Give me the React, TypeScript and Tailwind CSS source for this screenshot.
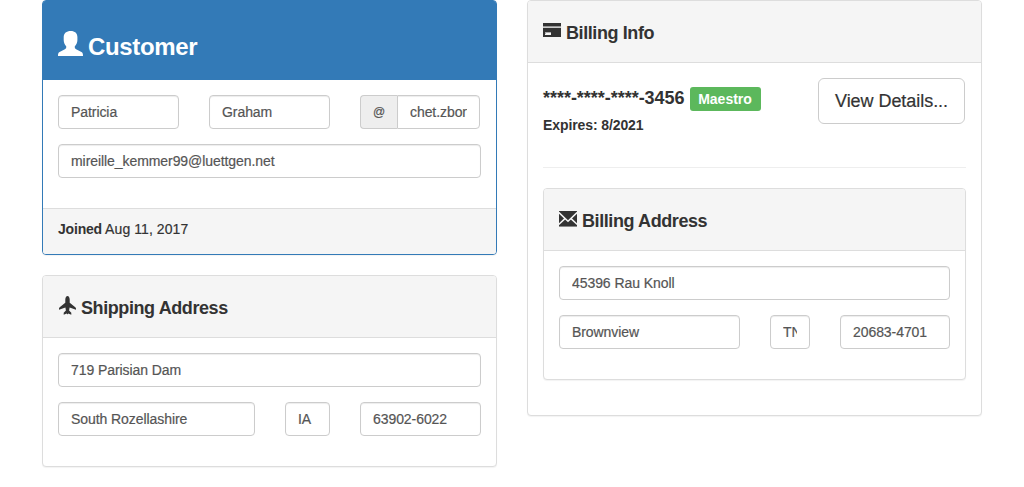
import type { ReactNode } from "react";

const field =
  "block h-[34px] min-w-0 rounded-[4px] border border-[#ccc] bg-white px-3 py-1.5 text-[14px] leading-5 tracking-[-0.07px] text-[#555] shadow-[inset_0_1px_1px_rgba(0,0,0,0.075)] outline-none [-webkit-text-stroke:0.2px_#555]";

function Field({ value, label, className }: { value: string; label: string; className: string }) {
  return <input aria-label={label} defaultValue={value} className={`${field} ${className}`} />;
}

function UserIcon() {
  return (
    <svg viewBox="0 0 25 25" className="mt-[14px] h-[25px] w-[25px] shrink-0" fill="currentColor">
      <path d="M12.700 0C8.500 0 5.700 2.200 5.700 6v3c0 2.600 1 4.800 2.500 6.300v1.300c0 .8-.5 1.200-1.300 1.600L1.600 21C.3 21.800 0 22.600 0 25h25c0-2.400-.3-3.200-1.600-4l-5.300-2.800c-.8-.4-1.300-.8-1.300-1.600v-1.300c1.600-1.500 2.600-3.700 2.600-6.300V6c0-3.800-2.500-6-6.700-6Z" />
    </svg>
  );
}

function PlaneIcon() {
  return (
    <svg viewBox="0 0 18 19" className="mt-px h-[19px] w-[18px] shrink-0" fill="currentColor">
      <path d="M9.500 0C8.300 0 7.300 1.700 7.300 3.600v3.100L1.700 11.200c-.5.4-.7.900-.7 1.400v1.200l6.400-2.200.5 3-2.200 2.200V18.800l3.100-1.300.7.900.7-.9 3.100 1.300v-2l-2.200-2.200.5-3 6.400 2.200v-1.200c0-.5-.2-1-.7-1.400l-5.600-4.500V3.600C11.700 1.700 10.700 0 9.500 0Z" />
    </svg>
  );
}

function CardIcon() {
  return (
    <svg viewBox="0 0 18 14" className="mt-[3px] h-[14px] w-[18px] shrink-0">
      <path fill="currentColor" d="M0 0h18v3H0zM0 5h18v9H0z" />
      <path fill="#999" d="M0 3h18v1H0z" />
      <path fill="#ccc" d="M0 4h18v1H0z" />
      <path fill="#f5f5f5" d="M2 9h6v3H2z" />
      <path fill="#aaa" d="M2 9h6v1H3v1H2z" />
    </svg>
  );
}

function MailIcon() {
  return (
    <svg viewBox="0 0 18 16" className="mt-[3px] h-[16px] w-[18px] shrink-0">
      <path fill="currentColor" d="M0 0h18v15H0z" />
      <path d="M-.3 1.300 9 10.300l9.300-9M-.3 13.500l6-5.600M18.300 13.500l-6-5.600" fill="none" stroke="#f5f5f5" strokeWidth="1.500" />
      <path fill="#888" d="M0 15h18v1H0z" />
    </svg>
  );
}

function PanelHeading({ icon, children }: { icon: ReactNode; children: ReactNode }) {
  return (
    <div className="flex h-[62px] items-start rounded-t-[3px] border-b border-[#ddd] bg-[#f5f5f5] px-[15px] pt-[19px]">
      {icon}
      <h4 className="ml-[5px] mt-[3px] whitespace-pre text-[18px] font-bold leading-5 tracking-[-0.41px]">{children}</h4>
    </div>
  );
}

const panel = "rounded-[4px] border border-[#ddd] bg-white shadow-[0_1px_1px_rgba(0,0,0,0.05)]";

export default function App() {
  return (
    <main className="flex h-[487px] items-start gap-[30px] overflow-hidden bg-white pl-[42px] font-['Liberation_Sans',Arial,sans-serif] text-[14px] leading-5 text-[#333]">
      <div className="flex w-[455px] flex-col gap-5">
        <section className="rounded-[4px] border border-[#337ab7] bg-white shadow-[0_1px_1px_rgba(0,0,0,0.05)]">
          <div className="flex h-[79px] items-start rounded-t-[2px] bg-[#337ab7] pl-[15px] pt-4 text-white">
            <UserIcon />
            <h3 className="ml-[5px] mt-[15px] text-[24px] font-bold leading-[30px] tracking-[-0.35px]">Customer</h3>
          </div>
          <div className="flex flex-col gap-[15px] px-[15px] pb-[30px] pt-[15px]">
            <div className="flex gap-[30px]">
              <Field label="First name" value="Patricia" className="w-[121px]" />
              <Field label="Last name" value="Graham" className="w-[121px]" />
              <div className="flex w-[120px]">
                <span className="flex h-[34px] w-[37px] items-center justify-center rounded-l-[4px] border border-r-0 border-[#ccc] bg-[#eee] text-[12px] text-[#555] [-webkit-text-stroke:0.2px_#555]">@</span>
                <Field label="Username" value="chet.zboncak" className="w-[83px] rounded-l-none" />
              </div>
            </div>
            <Field label="Email" value="mireille_kemmer99@luettgen.net" className="w-full" />
          </div>
          <div className="h-[46px] rounded-b-[3px] border-t border-[#ddd] bg-[#f5f5f5] px-[15px] pt-[10px]">
            <p>
              <strong className="tracking-[-0.2px]">Joined</strong>
              <span className="tracking-[0.08px] [-webkit-text-stroke:0.2px_#333]"> Aug 11, 2017</span>
            </p>
          </div>
        </section>

        <section className={panel}>
          <PanelHeading icon={<PlaneIcon />}>Shipping Address</PanelHeading>
          <div className="flex flex-col gap-[15px] px-[15px] pb-[30px] pt-[15px]">
            <Field label="Street" value="719 Parisian Dam" className="w-full" />
            <div className="flex gap-[30px]">
              <Field label="City" value="South Rozellashire" className="w-[197px]" />
              <Field label="State" value="IA" className="w-[45px]" />
              <Field label="Zip code" value="63902-6022" className="w-[121px]" />
            </div>
          </div>
        </section>
      </div>

      <section className={`w-[455px] ${panel}`}>
        <PanelHeading icon={<CardIcon />}>Billing Info</PanelHeading>
        <div className="px-[15px] pb-5 pt-[15px]">
          <div className="flex h-[90px] items-start justify-between border-b border-[#eee]">
            <div className="pt-[9px]">
              <h4 className="flex items-center text-[18px] font-bold leading-5">
                <span className="-mt-[2px] tracking-[-0.03px]">****-****-****-3456</span>
                <span className="ml-[5px] flex h-6 w-[71px] items-center justify-center rounded-[3px] bg-[#5cb85c] text-[14px] text-white">Maestro</span>
              </h4>
              <h5 className="mt-[4px] text-[14px] font-bold leading-5 tracking-[-0.1px]">Expires: 8/2021</h5>
            </div>
            <button className="mr-px h-[46px] w-[147px] rounded-[6px] border border-[#ccc] bg-white text-[18px] leading-6 tracking-[-0.05px] [-webkit-text-stroke:0.2px_#333]">View Details...</button>
          </div>
          <div className={`mt-5 ${panel}`}>
            <PanelHeading icon={<MailIcon />}>Billing Address</PanelHeading>
            <div className="flex flex-col gap-[15px] px-[15px] pb-[30px] pt-[15px]">
              <Field label="Billing street" value="45396 Rau Knoll" className="w-full" />
              <div className="flex gap-[30px]">
                <Field label="Billing city" value="Brownview" className="w-[181px]" />
                <Field label="Billing state" value="TN" className="w-[40px]" />
                <Field label="Billing zip code" value="20683-4701" className="w-[110px]" />
              </div>
            </div>
          </div>
        </div>
        <div className="h-[15px]" />
      </section>
    </main>
  );
}
